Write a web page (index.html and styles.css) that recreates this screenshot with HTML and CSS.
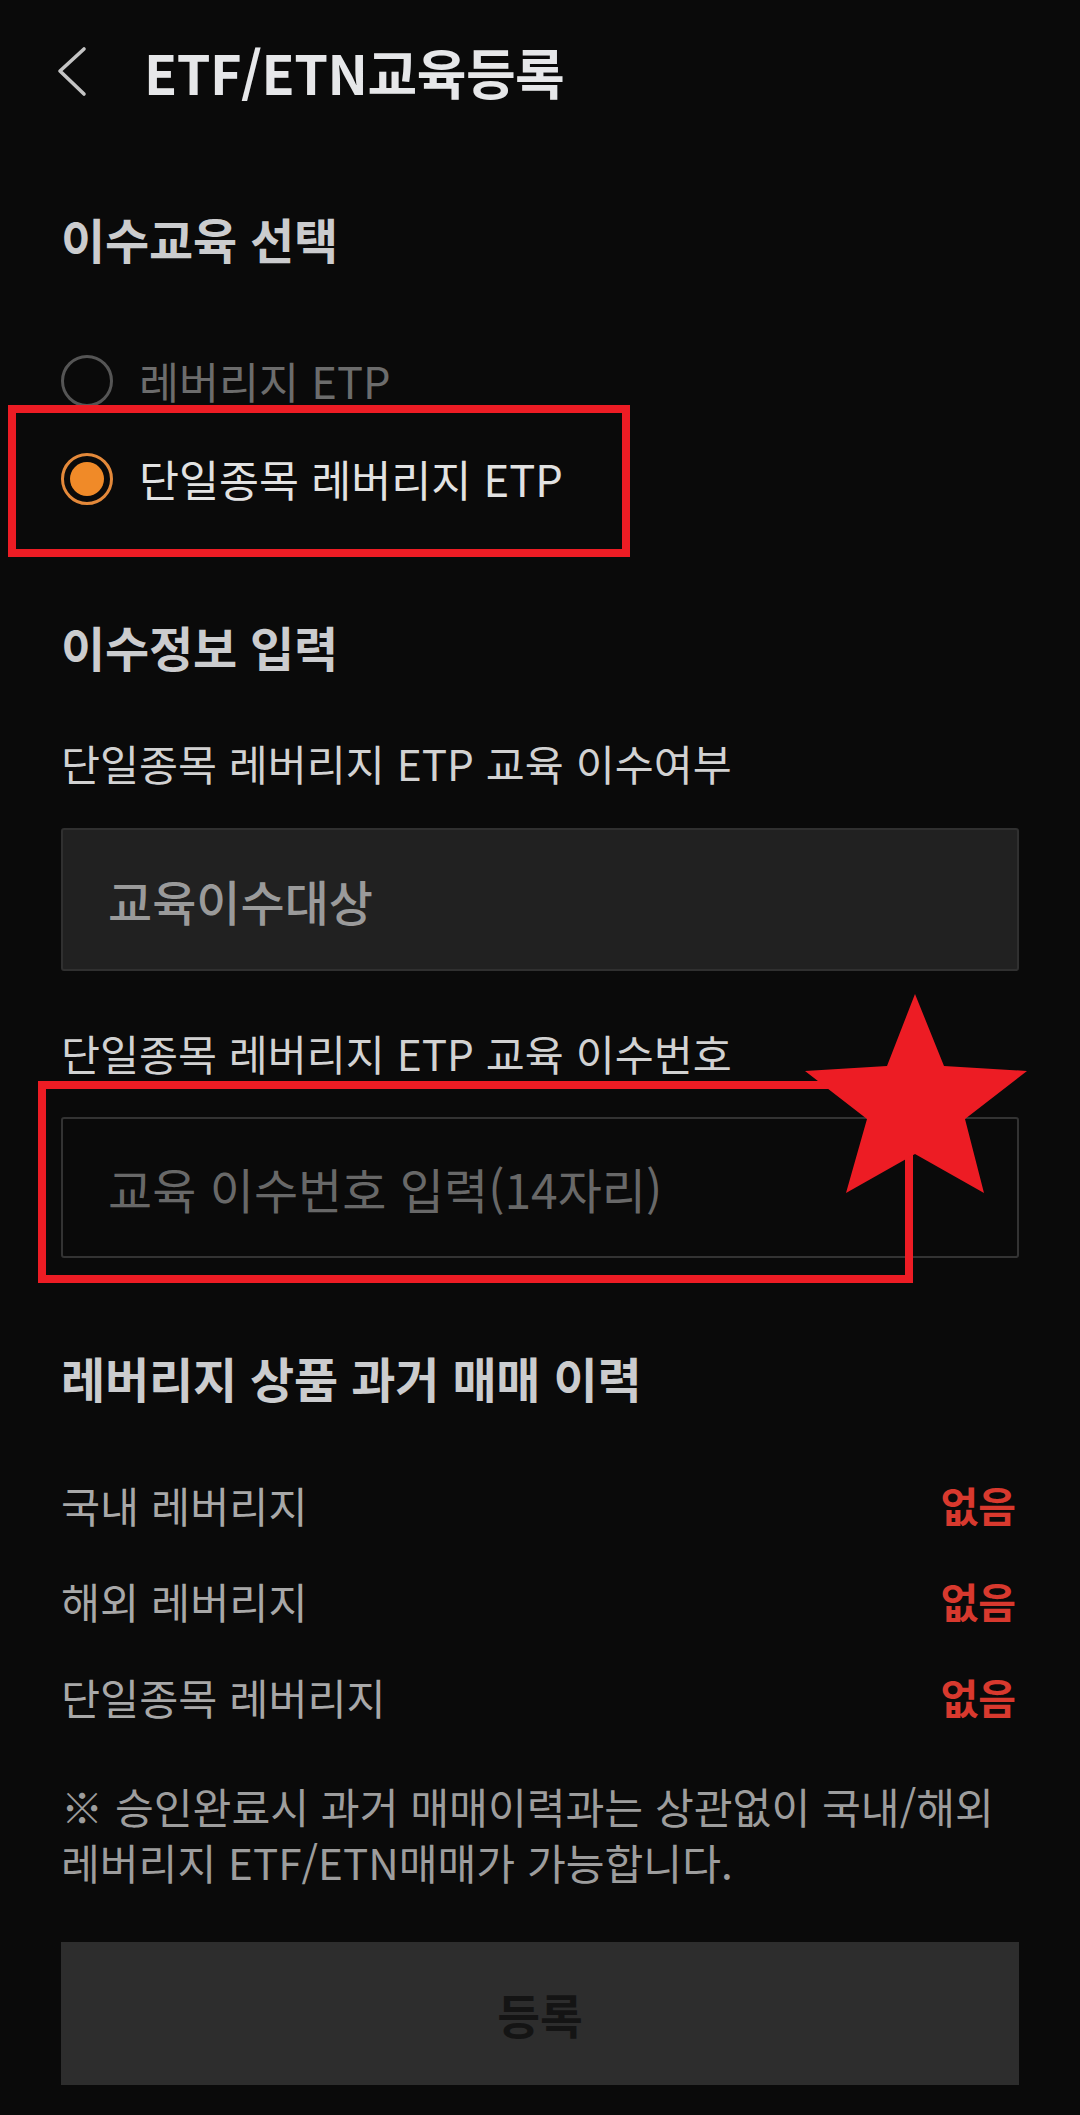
FILE: index.html
```html
<!DOCTYPE html>
<html lang="ko">
<head>
<meta charset="utf-8">
<title>ETF/ETN교육등록</title>
<link rel="stylesheet" href="styles.css">
</head>
<body>
<header class="topbar">
  <button class="back" aria-label="뒤로">
    <svg viewBox="0 0 32 52" width="32" height="52"><polyline points="27,3 3,25 27,48" fill="none" stroke="#c4c4c4" stroke-width="3.6" stroke-linecap="round" stroke-linejoin="round"/></svg>
  </button>
  <h1 class="title">ETF/ETN교육등록</h1>
</header>

<main class="content">
  <h2 class="heading h-first">이수교육 선택</h2>
  <div class="radios">
    <label class="radio">
      <span class="ring"></span>
      <span class="radio-text off">레버리지 ETP</span>
    </label>
    <label class="radio selected">
      <span class="ring on"><span class="dot"></span></span>
      <span class="radio-text">단일종목 레버리지 ETP</span>
      <span class="mark-rect mark-radio"></span>
    </label>
  </div>

  <h2 class="heading h-second">이수정보 입력</h2>
  <div class="label label-first">단일종목 레버리지 ETP 교육 이수여부</div>
  <div class="field field-disabled">교육이수대상</div>
  <div class="label label-second">단일종목 레버리지 ETP 교육 이수번호</div>
  <div class="field field-input">
    <span class="placeholder">교육 이수번호 입력(14자리)</span>
    <span class="mark-rect mark-input"></span>
    <svg class="star" viewBox="0 0 222 201" width="222" height="201"><polygon points="110,1 139,73 222,78 160,126 179,200 110,161 41,200 62,126 0,78 82,73" fill="#ed1c24"/></svg>
  </div>

  <h2 class="heading h-third">레버리지 상품 과거 매매 이력</h2>
  <ul class="history">
    <li class="row"><span>국내 레버리지</span><span class="none">없음</span></li>
    <li class="row"><span>해외 레버리지</span><span class="none">없음</span></li>
    <li class="row"><span>단일종목 레버리지</span><span class="none">없음</span></li>
  </ul>

  <p class="note">※ 승인완료시 과거 매매이력과는 상관없이 국내/해외<br>레버리지 ETF/ETN매매가 가능합니다.</p>

  <button class="submit">등록</button>
</main>
</body>
</html>
```

FILE: styles.css
```css
* { box-sizing: border-box; }

html, body {
  margin: 0;
  padding: 0;
  background: #0a0a0a;
}

body {
  font-family: "Noto Sans CJK KR", "Noto Sans", sans-serif;
  color: #d0d0d0;
  width: 1080px;
}

.topbar {
  height: 144px;
  display: flex;
  align-items: center;
}

.back {
  background: none;
  border: 0;
  padding: 0;
  margin-left: 57px;
  width: 32px;
  height: 52px;
  display: flex;
}

.title {
  margin: 0 0 0 55px;
  font-size: 54px;
  font-weight: 700;
  color: #e6e7e9;
  line-height: 60px;
  letter-spacing: -0.5px;
}

.content {
  padding: 0 61px;
}

.heading {
  margin: 0;
  font-size: 48px;
  font-weight: 700;
  color: #cbccce;
  line-height: 60px;
  letter-spacing: -0.2px;
}

.h-first { margin-top: 64px; }
.h-second { margin-top: 88px; }
.h-third { margin-top: 89px; }

.radios {
  margin-top: 64px;
  display: flex;
  flex-direction: column;
}

.radio {
  position: relative;
  height: 98px;
  display: flex;
  align-items: center;
}

.ring {
  width: 52px;
  height: 52px;
  border-radius: 50%;
  border: 3px solid #555555;
  display: flex;
  align-items: center;
  justify-content: center;
  flex: none;
}

.ring.on {
  border-color: #e4893a;
}

.dot {
  width: 34px;
  height: 34px;
  border-radius: 50%;
  background: #f08a28;
}

.radio-text {
  margin-left: 26px;
  font-size: 43.5px;
  line-height: 60px;
  color: #e2e2e2;
}

.radio-text.off {
  color: #6c6c6c;
}

.mark-rect {
  position: absolute;
  border: 8px solid #ed1c24;
  pointer-events: none;
}

.mark-radio {
  top: -25px;
  left: -53px;
  width: 622px;
  height: 152px;
}

.label {
  font-size: 42.4px;
  line-height: 60px;
  color: #d2d2d2;
}

.label-first { margin-top: 57px; }
.label-second { margin-top: 52px; }

.field {
  height: 143px;
  border: 2px solid #303030;
  border-radius: 3px;
  display: flex;
  align-items: center;
  padding-left: 45px;
  font-size: 48px;
}

.field-disabled {
  margin-top: 35px;
  background: #212121;
  color: #9a9a9a;
  font-weight: 500;
}

.field-input {
  position: relative;
  margin-top: 34px;
  height: 141px;
  background: #0a0a0a;
  border-color: #333333;
}

.placeholder {
  color: #686868;
}

.mark-input {
  top: -38px;
  left: -25px;
  width: 875px;
  height: 202px;
}

.star {
  position: absolute;
  left: 742px;
  top: -126px;
}

.history {
  list-style: none;
  margin: 49px 0 0;
  padding: 0;
}

.row {
  height: 96px;
  display: flex;
  align-items: center;
  justify-content: space-between;
  font-size: 42.5px;
  color: #a8a8a8;
}

.none {
  color: #d8392e;
  font-weight: 700;
  font-size: 41px;
  margin-right: 3px;
}

.note {
  margin: 34px 0 0;
  font-size: 42.2px;
  line-height: 56px;
  color: #9d9d9d;
  white-space: nowrap;
}

.submit {
  display: block;
  width: 100%;
  height: 143px;
  margin-top: 52px;
  border: 0;
  border-radius: 0;
  background: #2d2d2d;
  color: #141414;
  font-family: "Noto Sans CJK KR", sans-serif;
  font-size: 46.5px;
  font-weight: 700;
}
```
